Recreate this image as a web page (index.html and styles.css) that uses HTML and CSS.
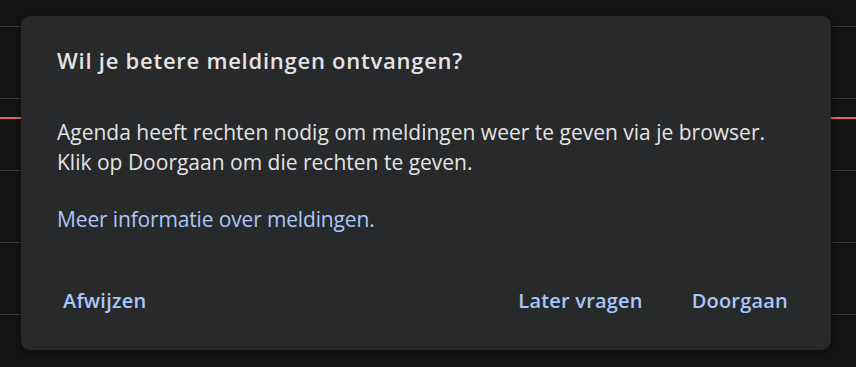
FILE: index.html
```html
<!DOCTYPE html>
<html lang="nl">
<head>
<meta charset="utf-8">
<title>Meldingen</title>
<link rel="stylesheet" href="styles.css">
</head>
<body>
<div class="grid">
  <div class="row first"></div>
  <div class="row"></div>
  <div class="row"></div>
  <div class="row"></div>
  <div class="row"></div>
  <div class="now"></div>
</div>
<div class="dialog" role="dialog">
  <h2 class="title">Wil je betere meldingen ontvangen?</h2>
  <p class="text">Agenda heeft rechten nodig om meldingen weer te geven via je browser.<br>Klik op Doorgaan om die rechten te geven.</p>
  <a class="link" href="#">Meer informatie over meldingen.</a>
  <div class="actions">
    <button class="btn">Afwijzen</button>
    <div class="spacer"></div>
    <button class="btn">Later vragen</button>
    <button class="btn">Doorgaan</button>
  </div>
</div>
</body>
</html>
```
FILE: styles.css
```css
html, body {
  margin: 0;
  padding: 0;
  height: 100%;
}
body {
  background: #131314;
  font-family: "Open Sans", Roboto, Arial, sans-serif;
  overflow: hidden;
  position: relative;
}
.grid {
  display: flex;
  flex-direction: column;
  position: relative;
}
.row {
  height: 71px;
  border-bottom: 1px solid #3a3a3c;
}
.row.first {
  height: 26px;
}
.now {
  position: absolute;
  left: 0;
  right: 0;
  top: 117px;
  height: 2px;
  background: #e2675f;
}
.dialog {
  position: absolute;
  left: 21px;
  top: 16px;
  width: 810px;
  height: 334px;
  box-sizing: border-box;
  padding: 29px 36px 0 36px;
  background: #28292b;
  border-radius: 9px;
  box-shadow: 0 2px 6px rgba(0,0,0,0.45);
  display: flex;
  flex-direction: column;
  align-items: flex-start;
}
.title {
  margin: 0;
  font-size: 22px;
  font-weight: 600;
  line-height: 30px;
  letter-spacing: 0.75px;
  color: #e3e3e3;
}
.text {
  margin: 42px 0 0 0;
  font-size: 21px;
  line-height: 30px;
  color: #e3e3e3;
  font-weight: 400;
}
.link {
  margin-top: 27px;
  font-size: 21px;
  line-height: 30px;
  letter-spacing: -0.15px;
  color: #a8c7fa;
  text-decoration: none;
}
.actions {
  margin-top: 47px;
  align-self: stretch;
  display: flex;
  align-items: center;
  margin-left: -1px;
}
.spacer {
  flex: 1;
}
.btn {
  background: none;
  border: none;
  font-family: inherit;
  font-size: 20px;
  font-weight: 600;
  letter-spacing: 0.2px;
  line-height: 40px;
  height: 40px;
  padding: 0 7px;
  color: #a8c7fa;
  cursor: pointer;
}
.btn + .btn {
  margin-left: 35px;
}
```
